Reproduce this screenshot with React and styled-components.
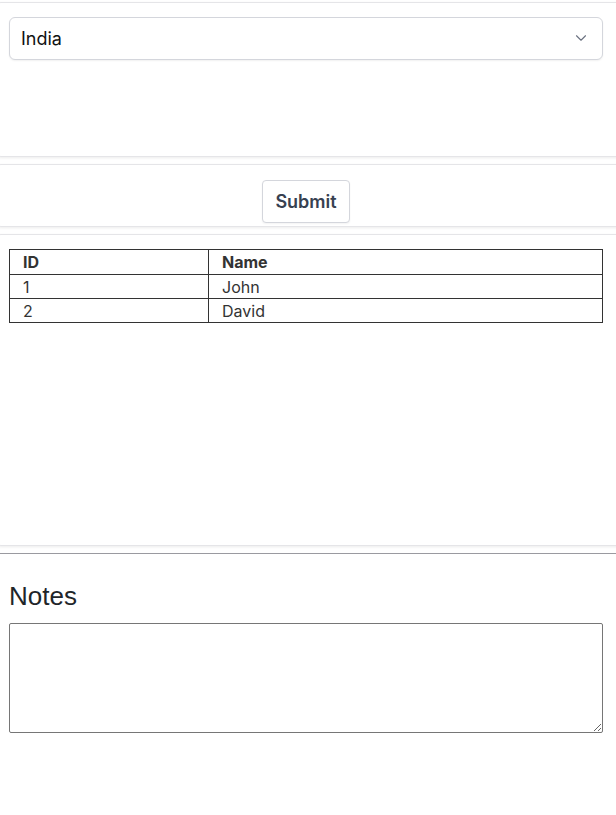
import React from "react";
import styled, { createGlobalStyle } from "styled-components";
import { ChevronDown } from "lucide-react";

const GlobalStyle = createGlobalStyle`
  html, body {
    margin: 0;
    padding: 0;
    background: #ffffff;
    overflow-x: hidden;
  }
  body {
    font-family: Inter, "Noto Sans", sans-serif;
    color: #333333;
  }
`;

const rows = [
  { id: 1, name: "John" },
  { id: 2, name: "David" },
];

const App = () => {
  return (
    <>
      <GlobalStyle />
      <Page>
        <Card height={155} top={2}>
          <SelectWrap>
            <StyledSelect defaultValue="India">
              <option>India</option>
              <option>USA</option>
              <option>UK</option>
            </StyledSelect>
            <SelectIcon>
              <ChevronDown size={18} strokeWidth={1.5} />
            </SelectIcon>
          </SelectWrap>
        </Card>
        <Card height={63}>
          <ButtonRow>
            <SubmitButton type="button">Submit</SubmitButton>
          </ButtonRow>
        </Card>
        <Card height={312}>
          <Table>
            <thead>
              <tr>
                <Th>ID</Th>
                <Th>Name</Th>
              </tr>
            </thead>
            <tbody>
              {rows.map((r) => (
                <tr key={r.id}>
                  <Td>{r.id}</Td>
                  <Td>{r.name}</Td>
                </tr>
              ))}
            </tbody>
          </Table>
        </Card>
        <Divider />
        <NotesSection>
          <NotesTitle>Notes</NotesTitle>
          <NotesArea />
        </NotesSection>
      </Page>
    </>
  );
};

export default App;

const Page = styled.div`
  width: 630px;
  margin-left: -5px;
  display: flex;
  flex-direction: column;
`;

const Card = styled.div`
  box-sizing: border-box;
  height: ${(p) => p.height}px;
  margin-top: ${(p) => p.top || 0}px;
  margin-bottom: 7px;
  padding: 14px 0 0 13px;
  background: #ffffff;
  border: 1px solid #e5e5e8;
  border-radius: 6px;
  box-shadow: 0 1px 3px rgba(0, 0, 0, 0.08);
`;

const SelectWrap = styled.div`
  position: relative;
  width: 594px;
`;

const StyledSelect = styled.select`
  appearance: none;
  box-sizing: border-box;
  width: 100%;
  height: 43px;
  padding: 0 40px 0 11px;
  font-family: Inter, sans-serif;
  font-size: 18px;
  color: #111111;
  background: #ffffff;
  border: 1px solid #d4d6dc;
  border-radius: 6px;
  box-shadow: 0 1px 2px rgba(0, 0, 0, 0.06);
  outline: none;
`;

const SelectIcon = styled.span`
  position: absolute;
  right: 13px;
  top: 12px;
  color: #6b7280;
  display: flex;
  pointer-events: none;
`;

const ButtonRow = styled.div`
  width: 594px;
  display: flex;
  justify-content: center;
  padding-top: 1px;
`;

const SubmitButton = styled.button`
  box-sizing: border-box;
  height: 43px;
  padding: 0 12px;
  font-family: Inter, sans-serif;
  font-size: 18px;
  font-weight: 600;
  color: #374151;
  background: #ffffff;
  border: 1px solid #d4d6dc;
  border-radius: 4px;
  box-shadow: 0 1px 2px rgba(0, 0, 0, 0.05);
`;

const Table = styled.table`
  width: 594px;
  border-collapse: collapse;
  font-size: 16px;
  color: #333333;
`;

const Th = styled.th`
  text-align: left;
  font-weight: 700;
  height: 24px;
  padding: 0 13px;
  border: 1px solid #333333;
  &:first-child {
    width: 172px;
  }
`;

const Td = styled.td`
  height: 23px;
  padding: 0 13px;
  border: 1px solid #333333;
`;

const Divider = styled.hr`
  margin: 0;
  border: 0;
  border-top: 1px solid #9a9aa0;
  height: 0;
`;

const NotesSection = styled.section`
  padding: 26px 0 0 14px;
  display: flex;
  flex-direction: column;
  gap: 11px;
`;

const NotesTitle = styled.h2`
  margin: 0;
  font-family: "Liberation Sans", Arial, sans-serif;
  font-size: 26px;
  font-weight: 400;
  color: #212529;
  line-height: 32px;
`;

const NotesArea = styled.textarea`
  box-sizing: border-box;
  width: 594px;
  height: 110px;
  border: 1px solid #767676;
  border-radius: 2px;
  resize: vertical;
  font-family: Inter, sans-serif;
`;
